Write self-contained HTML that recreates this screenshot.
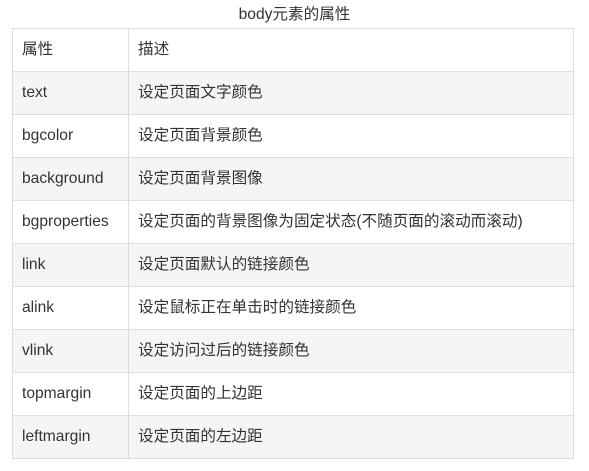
<!DOCTYPE html>
<html><head><meta charset="utf-8"><style>
body{margin:0;background:#fff;font-family:"Liberation Sans","Noto Sans CJK SC",sans-serif;font-size:15.6px;color:#333;}
.cap{position:absolute;left:0;width:589px;top:5px;text-align:center;line-height:20px;font-size:15.6px;}
table{position:absolute;left:12px;top:28px;width:562px;border-collapse:collapse;}
td{border:1px solid #ddd;height:43px;padding:0 0 0 9px;box-sizing:border-box;line-height:20px;vertical-align:middle;}
td span{display:inline-block;height:20px;line-height:20px;vertical-align:top;}
td:first-child{width:116px;}
tr.g td{background:#f5f5f5;}
</style></head><body>
<div class="cap">body元素的属性</div>
<table>
<tr><td><span>属性</span></td><td><span>描述</span></td></tr>
<tr class="g"><td><span>text</span></td><td><span>设定页面文字颜色</span></td></tr>
<tr><td><span>bgcolor</span></td><td><span>设定页面背景颜色</span></td></tr>
<tr class="g"><td><span>background</span></td><td><span>设定页面背景图像</span></td></tr>
<tr><td><span>bgproperties</span></td><td><span>设定页面的背景图像为固定状态(不随页面的滚动而滚动)</span></td></tr>
<tr class="g"><td><span>link</span></td><td><span>设定页面默认的链接颜色</span></td></tr>
<tr><td><span>alink</span></td><td><span>设定鼠标正在单击时的链接颜色</span></td></tr>
<tr class="g"><td><span>vlink</span></td><td><span>设定访问过后的链接颜色</span></td></tr>
<tr><td><span>topmargin</span></td><td><span>设定页面的上边距</span></td></tr>
<tr class="g"><td><span>leftmargin</span></td><td><span>设定页面的左边距</span></td></tr>
</table>
</body></html>
